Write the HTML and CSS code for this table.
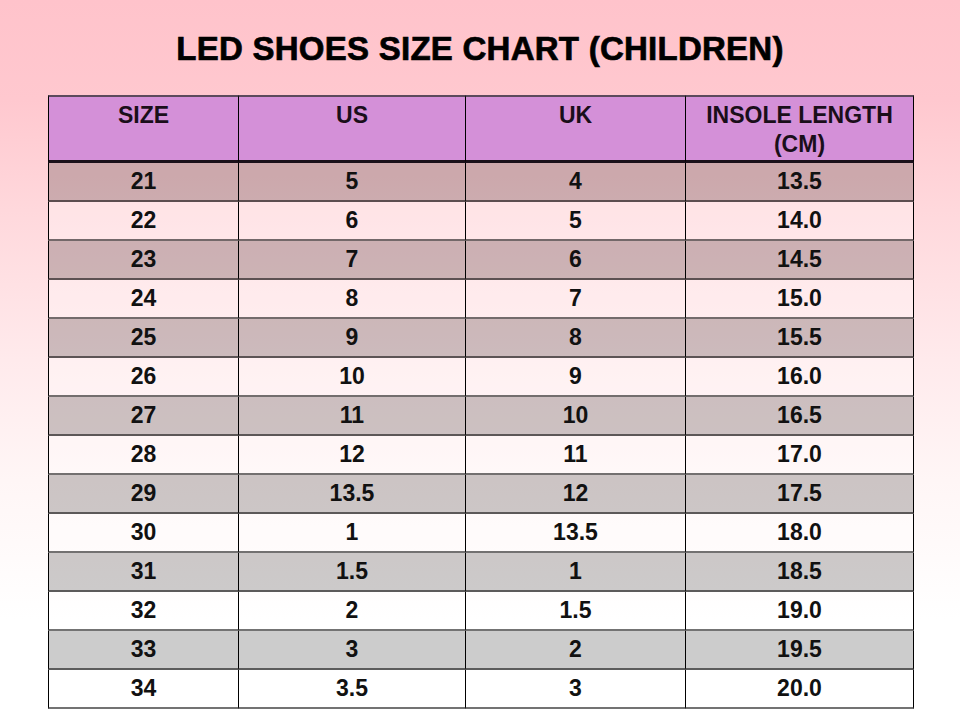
FILE: index.html
```html
<!DOCTYPE html>
<html lang="en">
<head>
<meta charset="utf-8">
<title>LED Shoes Size Chart (Children)</title>
<link rel="stylesheet" href="styles.css">
</head>
<body>
<div class="page">
  <h1 class="title">LED SHOES SIZE CHART (CHILDREN)</h1>
  <table class="chart">
    <thead>
      <tr>
        <th class="c1">SIZE</th>
        <th class="c2">US</th>
        <th class="c3">UK</th>
        <th class="c4">INSOLE LENGTH<br>(CM)</th>
      </tr>
    </thead>
    <tbody>
      <tr class="dark"><td>21</td><td>5</td><td>4</td><td>13.5</td></tr>
      <tr class="light"><td>22</td><td>6</td><td>5</td><td>14.0</td></tr>
      <tr class="dark"><td>23</td><td>7</td><td>6</td><td>14.5</td></tr>
      <tr class="light"><td>24</td><td>8</td><td>7</td><td>15.0</td></tr>
      <tr class="dark"><td>25</td><td>9</td><td>8</td><td>15.5</td></tr>
      <tr class="light"><td>26</td><td>10</td><td>9</td><td>16.0</td></tr>
      <tr class="dark"><td>27</td><td>11</td><td>10</td><td>16.5</td></tr>
      <tr class="light"><td>28</td><td>12</td><td>11</td><td>17.0</td></tr>
      <tr class="dark"><td>29</td><td>13.5</td><td>12</td><td>17.5</td></tr>
      <tr class="light"><td>30</td><td>1</td><td>13.5</td><td>18.0</td></tr>
      <tr class="dark"><td>31</td><td>1.5</td><td>1</td><td>18.5</td></tr>
      <tr class="light"><td>32</td><td>2</td><td>1.5</td><td>19.0</td></tr>
      <tr class="dark"><td>33</td><td>3</td><td>2</td><td>19.5</td></tr>
      <tr class="light"><td>34</td><td>3.5</td><td>3</td><td>20.0</td></tr>
    </tbody>
  </table>
</div>
</body>
</html>
```
FILE: styles.css
```css
html, body {
  margin: 0;
  padding: 0;
}
body {
  width: 960px;
  height: 720px;
  overflow: hidden;
  background: linear-gradient(to bottom, #ffc3cb 0px, #ffc8cf 100px, #ffd8dc 210px, #ffeaec 360px, #fff6f6 480px, #ffffff 620px, #ffffff 720px);
  font-family: "Liberation Sans", Arial, sans-serif;
}
.page {
  padding-top: 29px;
}
.title {
  margin: 0 0 26px 0;
  font-family: "Liberation Sans", Arial, sans-serif;
  font-weight: 700;
  font-size: 33px;
  line-height: 40px;
  height: 40px;
  letter-spacing: 0.25px;
  -webkit-text-stroke: 0.7px #000;
  text-align: center;
  color: #000;
}
.chart {
  margin-left: 48px;
  border-collapse: separate;
  border-spacing: 0;
  table-layout: fixed;
  width: 866px;
  font-weight: 700;
  font-size: 23px;
  color: #111;
}
.chart th, .chart td {
  box-sizing: border-box;
  text-align: center;
  border-left: 1px solid #000;
  padding: 0;
}
.chart th:last-child, .chart td:last-child {
  border-right: 1px solid #000;
}
.chart th {
  background: #d490d8;
  color: #1a0e1a;
  font-weight: 700;
  vertical-align: top;
  line-height: 29px;
  padding-top: 4px;
  padding-bottom: 1px;
  border-top: 2px solid #5c4a5c;
  border-bottom: 3px solid #1a101a;
}
.chart .c1 { width: 190px; }
.chart .c2 { width: 227px; }
.chart .c3 { width: 220px; }
.chart .c4 { width: 229px; }
.chart td {
  line-height: 37px;
  border-bottom: 2px solid rgba(0, 0, 0, 0.55);
  vertical-align: middle;
}
.chart tr.dark td {
  background: rgba(0, 0, 0, 0.2);
}
.chart tr.light td {
  background: rgba(255, 255, 255, 0.3);
}
```
